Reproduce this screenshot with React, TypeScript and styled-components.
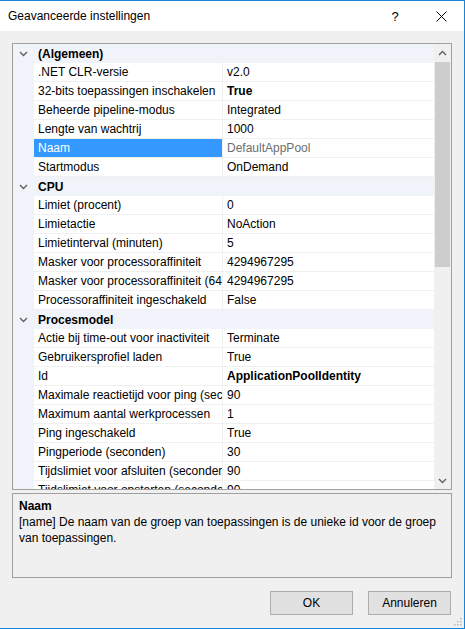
import React from "react";
import styled, { createGlobalStyle } from "styled-components";

const Global = createGlobalStyle`
  html, body { margin: 0; padding: 0; }
  body { background: #f0f0f0; font-family: "Liberation Sans", Arial, sans-serif; font-size: 12px; color: #000; }
  * { box-sizing: border-box; }
`;

const Window = styled.div`
  width: 465px;
  height: 629px;
  background: #f0f0f0;
  border-top: 1px solid #1883d7;
  border-right: 1px solid #1883d7;
  border-bottom: 1px solid #1883d7;
  display: flex;
  flex-direction: column;
  position: relative;
  overflow: hidden;
`;

const TitleBar = styled.div`
  height: 30px;
  background: #fff;
  display: flex;
  align-items: center;
  padding-left: 8px;
  flex-shrink: 0;
`;

const Title = styled.div`
  flex: 1;
  font-size: 12px;
  color: #000;
`;

const TitleButton = styled.div`
  width: 46px;
  height: 30px;
  display: flex;
  align-items: center;
  justify-content: center;
  font-size: 13px;
  color: #000;
`;

const Body = styled.div`
  flex: 1;
  display: flex;
  flex-direction: column;
  padding: 12px 12px 0 12px;
`;

const Grid = styled.div`
  height: 447px;
  border: 1px solid #a0a0a0;
  background: #fff;
  display: flex;
  overflow: hidden;
`;

const Rows = styled.div`
  flex: 1;
  overflow: hidden;
  display: flex;
  flex-direction: column;
`;

const Row = styled.div`
  height: 19px;
  flex-shrink: 0;
  display: flex;
`;

const Gutter = styled.div`
  width: 21px;
  background: #f0f3f9;
  flex-shrink: 0;
  display: flex;
  align-items: center;
  justify-content: center;
`;

const CategoryRow = styled(Row)`
  background: #f0f3f9;
  align-items: center;
`;

const CategoryLabel = styled.div`
  font-weight: bold;
  padding-left: 4px;
`;

const NameCell = styled.div<{ $selected?: boolean }>`
  width: 189px;
  flex-shrink: 0;
  padding-left: 4px;
  white-space: nowrap;
  overflow: hidden;
  line-height: 18px;
  border-bottom: 1px solid #f0f0f0;
  border-right: 1px solid #f0f0f0;
  background: ${(p) => (p.$selected ? "#3399ff" : "#fff")};
  color: ${(p) => (p.$selected ? "#fff" : "#000")};
`;

const ValueCell = styled.div<{ $bold?: boolean; $gray?: boolean }>`
  flex: 1;
  padding-left: 4px;
  white-space: nowrap;
  overflow: hidden;
  line-height: 18px;
  border-bottom: 1px solid #f0f0f0;
  font-weight: ${(p) => (p.$bold ? "bold" : "normal")};
  color: ${(p) => (p.$gray ? "#6d6d6d" : "#000")};
`;

const ScrollBar = styled.div`
  width: 17px;
  flex-shrink: 0;
  background: #f0f0f0;
  display: flex;
  flex-direction: column;
`;

const ScrollArrow = styled.div`
  height: 17px;
  display: flex;
  align-items: center;
  justify-content: center;
  flex-shrink: 0;
`;

const ScrollTrack = styled.div`
  flex: 1;
  display: flex;
  flex-direction: column;
  padding: 1px 1px 0 1px;
`;

const Thumb = styled.div`
  height: 205px;
  background: #cdcdcd;
`;

const Help = styled.div`
  margin-top: 3px;
  height: 85px;
  border: 1px solid #a0a0a0;
  background: #f0f0f0;
  padding: 4px 6px;
`;

const HelpTitle = styled.div`
  font-weight: bold;
  line-height: 16px;
`;

const HelpText = styled.div`
  line-height: 16px;
`;

const Buttons = styled.div`
  display: flex;
  justify-content: flex-end;
  gap: 15px;
  margin-top: 13px;
  padding-right: 1px;
`;

const Button = styled.button`
  width: 83px;
  height: 24px;
  background: #e1e1e1;
  border: 1px solid #adadad;
  font-family: inherit;
  font-size: 12px;
  color: #000;
  padding: 0;
`;

const Grip = styled.svg`
  position: absolute;
  right: 2px;
  bottom: 2px;
`;

const Chevron = ({ up }: { up?: boolean }) => (
  <svg width="9" height="6" viewBox="0 0 9 6">
    <path
      d={up ? "M1 5 L4.5 1.5 L8 5" : "M1 1 L4.5 4.5 L8 1"}
      fill="none"
      stroke={up ? "#606060" : "#606060"}
      strokeWidth="1.4"
    />
  </svg>
);

type Item = { name: string; value: string; bold?: boolean; gray?: boolean; selected?: boolean };
type Cat = { title: string; items: Item[] };

const data: Cat[] = [
  {
    title: "(Algemeen)",
    items: [
      { name: ".NET CLR-versie", value: "v2.0" },
      { name: "32-bits toepassingen inschakelen", value: "True", bold: true },
      { name: "Beheerde pipeline-modus", value: "Integrated" },
      { name: "Lengte van wachtrij", value: "1000" },
      { name: "Naam", value: "DefaultAppPool", gray: true, selected: true },
      { name: "Startmodus", value: "OnDemand" },
    ],
  },
  {
    title: "CPU",
    items: [
      { name: "Limiet (procent)", value: "0" },
      { name: "Limietactie", value: "NoAction" },
      { name: "Limietinterval (minuten)", value: "5" },
      { name: "Masker voor processoraffiniteit", value: "4294967295" },
      { name: "Masker voor processoraffiniteit (64-bits optie)", value: "4294967295" },
      { name: "Processoraffiniteit ingeschakeld", value: "False" },
    ],
  },
  {
    title: "Procesmodel",
    items: [
      { name: "Actie bij time-out voor inactiviteit", value: "Terminate" },
      { name: "Gebruikersprofiel laden", value: "True" },
      { name: "Id", value: "ApplicationPoolIdentity", bold: true },
      { name: "Maximale reactietijd voor ping (seconden)", value: "90" },
      { name: "Maximum aantal werkprocessen", value: "1" },
      { name: "Ping ingeschakeld", value: "True" },
      { name: "Pingperiode (seconden)", value: "30" },
      { name: "Tijdslimiet voor afsluiten (seconden)", value: "90" },
      { name: "Tijdslimiet voor opstarten (seconden)", value: "90" },
    ],
  },
];

export default function App() {
  return (
    <>
      <Global />
      <Window>
        <TitleBar>
          <Title>Geavanceerde instellingen</Title>
          <TitleButton>?</TitleButton>
          <TitleButton>
            <svg width="11" height="11" viewBox="0 0 11 11">
              <path d="M0.5 0.5 L10.5 10.5 M10.5 0.5 L0.5 10.5" stroke="#000" strokeWidth="1" />
            </svg>
          </TitleButton>
        </TitleBar>
        <Body>
          <Grid>
            <Rows>
              {data.map((cat) => (
                <React.Fragment key={cat.title}>
                  <CategoryRow>
                    <Gutter>
                      <Chevron />
                    </Gutter>
                    <CategoryLabel>{cat.title}</CategoryLabel>
                  </CategoryRow>
                  {cat.items.map((it) => (
                    <Row key={it.name}>
                      <Gutter />
                      <NameCell $selected={it.selected}>{it.name}</NameCell>
                      <ValueCell $bold={it.bold} $gray={it.gray}>
                        {it.value}
                      </ValueCell>
                    </Row>
                  ))}
                </React.Fragment>
              ))}
            </Rows>
            <ScrollBar>
              <ScrollArrow>
                <Chevron up />
              </ScrollArrow>
              <ScrollTrack>
                <Thumb />
              </ScrollTrack>
              <ScrollArrow>
                <Chevron />
              </ScrollArrow>
            </ScrollBar>
          </Grid>
          <Help>
            <HelpTitle>Naam</HelpTitle>
            <HelpText>
              [name] De naam van de groep van toepassingen is de unieke id voor de groep van toepassingen.
            </HelpText>
          </Help>
          <Buttons>
            <Button>OK</Button>
            <Button>Annuleren</Button>
          </Buttons>
        </Body>
        <Grip width="10" height="10" viewBox="0 0 10 10">
          {[
            [8, 2], [8, 5], [5, 5], [8, 8], [5, 8], [2, 8],
          ].map(([x, y], i) => (
            <rect key={i} x={x} y={y} width="1.5" height="1.5" fill="#b8b8b8" />
          ))}
        </Grip>
      </Window>
    </>
  );
}
